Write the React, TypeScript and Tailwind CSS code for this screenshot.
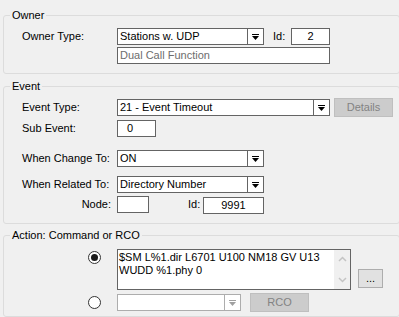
import React from "react";

const font = { fontFamily: '"Liberation Sans", Arial, sans-serif' };

const Arrow = ({ disabled }: { disabled?: boolean }) => (
  <svg width="7" height="6" viewBox="0 0 7 6" className={disabled ? "fill-[#a0a0a0]" : "fill-black"}>
    <rect x="0" y="0" width="7" height="1" />
    <polygon points="0,2 7,2 3.5,6" />
  </svg>
);

const Combo = ({ value, width, disabled }: { value: string; width: string; disabled?: boolean }) => (
  <div
    className={`flex h-[17px] bg-white border ${disabled ? "border-[#adadad]" : "border-[#646464]"} ${width}`}
  >
    <div className="flex-1 pl-[2px] leading-[15px] truncate">{value}</div>
    <div
      className={`w-[16px] flex items-center justify-center border-l ${disabled ? "border-[#adadad]" : "border-[#646464]"}`}
    >
      <Arrow disabled={disabled} />
    </div>
  </div>
);

const TextBox = ({
  value,
  width,
  className = "",
}: {
  value: string;
  width: string;
  className?: string;
}) => (
  <div className={`h-[17px] bg-white border border-[#646464] leading-[15px] ${width} ${className}`}>{value}</div>
);

const Radio = ({ checked }: { checked?: boolean }) => (
  <div className="w-[13px] h-[13px] rounded-full border border-[#333333] bg-white flex items-center justify-center">
    {checked && <div className="w-[7px] h-[7px] rounded-full bg-[#1a1a1a]" />}
  </div>
);

const Group = ({ title, className = "", children }: { title: string; className?: string; children: React.ReactNode }) => (
  <fieldset className={`ml-[3px] w-[397px] border border-[#dcdcdc] rounded-[3px] p-0 ${className}`}>
    <legend className="ml-[6px] px-[2px] leading-[13px]">{title}</legend>
    {children}
  </fieldset>
);

const Chevron = ({ up }: { up?: boolean }) => (
  <svg width="9" height="6" viewBox="0 0 9 6" fill="none" stroke="#c4c4c4" strokeWidth="1.5">
    {up ? <polyline points="1,5 4.5,1.5 8,5" /> : <polyline points="1,1 4.5,4.5 8,1" />}
  </svg>
);

export default function App() {
  return (
    <div className="w-[399px] h-[317px] overflow-hidden bg-[#f0f0f0] text-[11px] text-black" style={font}>
      <div className="pt-[9px]">
        <Group title="Owner">
          <div className="pl-[18px] pt-[6px] pb-[9px]">
            <div className="flex items-center h-[17px]">
              <span className="w-[95px]">Owner Type:</span>
              <Combo value="Stations w. UDP" width="w-[147px]" />
              <span className="ml-[9px] w-[18px]">Id:</span>
              <TextBox value="2" width="w-[39px]" className="text-center" />
            </div>
            <div className="flex items-center h-[17px] mt-[2px]">
              <span className="w-[95px]" />
              <TextBox value="Dual Call Function" width="w-[213px]" className="pl-[2px] text-[#6d6d6d]" />
            </div>
          </div>
        </Group>

        <Group title="Event" className="mt-[6px]">
          <div className="pl-[18px] pt-[5px] pb-[10px]">
            <div className="flex items-center h-[19px]">
              <span className="w-[95px]">Event Type:</span>
              <Combo value="21 - Event Timeout" width="w-[213px]" />
              <div className="ml-[4px] w-[59px] h-[19px] bg-[#cccccc] border border-[#bfbfbf] text-[#838383] flex items-center justify-center">
                Details
              </div>
            </div>
            <div className="flex items-center h-[17px] mt-[3px]">
              <span className="w-[95px]">Sub Event:</span>
              <TextBox value="0" width="w-[39px]" className="pl-[9px]" />
            </div>
            <div className="flex items-center h-[17px] mt-[13px]">
              <span className="w-[95px]">When Change To:</span>
              <Combo value="ON" width="w-[147px]" />
            </div>
            <div className="flex items-center h-[17px] mt-[9px]">
              <span className="w-[95px] whitespace-nowrap">When Related To:</span>
              <Combo value="Directory Number" width="w-[147px]" />
            </div>
            <div className="flex items-center h-[17px] mt-[3px]">
              <span className="w-[95px] text-right pr-[6px]">Node:</span>
              <TextBox value="" width="w-[32px]" />
              <span className="ml-[39px] w-[15px]">Id:</span>
              <TextBox value="9991" width="w-[61px]" className="text-center mt-[2px]" />
            </div>
          </div>
        </Group>

        <Group title="Action: Command or RCO" className="mt-[5px]">
          <div className="pl-[18px] pt-[7px] pb-[4px]">
            <div className="flex items-end">
              <div className="ml-[66px] self-start mt-[2px]">
                <Radio checked />
              </div>
              <div className="ml-[16px] w-[234px] h-[41px] bg-white border border-[#646464] flex">
                <div className="flex-1 pl-[1px] pt-[1px] leading-[13px]">
                  $SM L%1.dir L6701 U100 NM18 GV U13
                  <br />
                  WUDD %1.phy 0
                </div>
                <div className="w-[16px] bg-[#f0f0f0] flex flex-col items-center justify-between py-[6px]">
                  <Chevron up />
                  <Chevron />
                </div>
              </div>
              <div className="ml-[7px] mb-[2px] w-[25px] h-[19px] bg-[#e1e1e1] border border-[#adadad] flex items-center justify-center leading-none">
                ...
              </div>
            </div>
            <div className="flex items-center h-[19px] mt-[3px]">
              <div className="ml-[66px]">
                <Radio />
              </div>
              <div className="ml-[16px]">
                <Combo value="" width="w-[124px]" disabled />
              </div>
              <div className="ml-[9px] w-[59px] h-[19px] bg-[#cccccc] border border-[#bfbfbf] text-[#838383] flex items-center justify-center">
                RCO
              </div>
            </div>
          </div>
        </Group>
      </div>
    </div>
  );
}
